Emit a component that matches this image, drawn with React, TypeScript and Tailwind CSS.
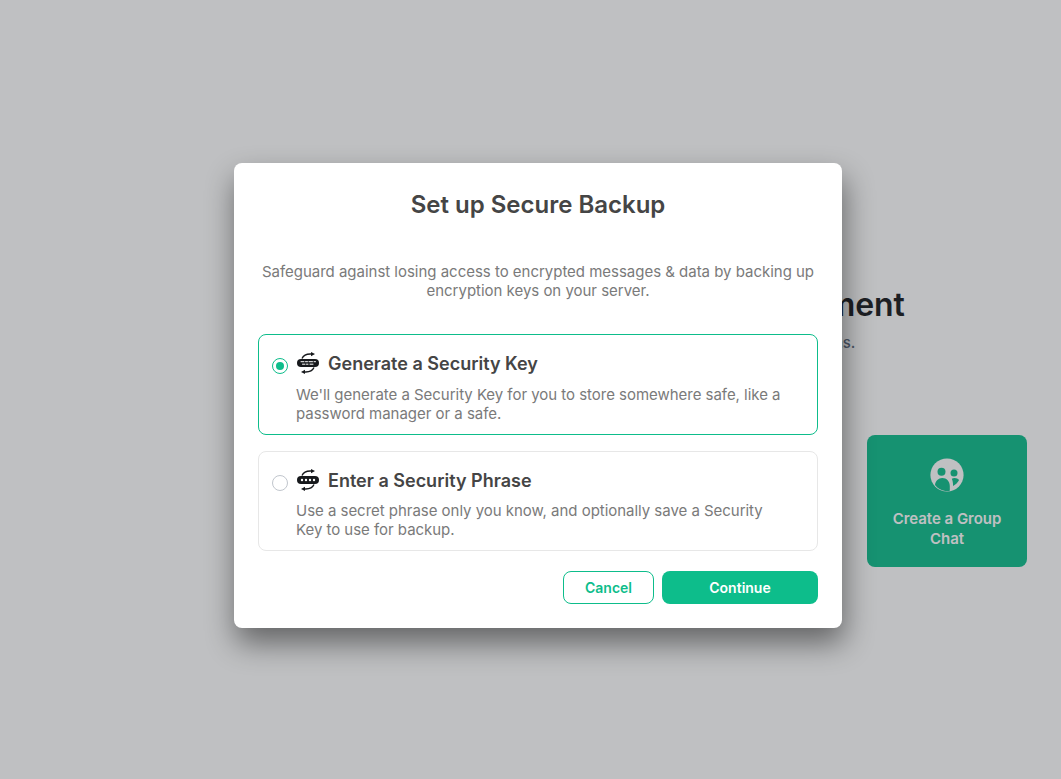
import React from 'react';

const inter = { fontFamily: 'Inter, "Noto Sans", sans-serif' };

function KeyIcon({ dots }: { dots: boolean }) {
  return (
    <svg width="24" height="24" viewBox="0 0 24 24" className="shrink-0" fill="none">
      <path d="M6 7.500C7.500 4.200 10.500 2.800 15 3" stroke="#17191c" strokeWidth="1.400" />
      <path d="M15 1l4 2.100L15 5.200z" fill="#17191c" />
      <path d="M18 16.500C16.500 19.800 13.500 21.200 9 21" stroke="#17191c" strokeWidth="1.400" />
      <path d="M9 18.800l-4 2.100L9 23z" fill="#17191c" />
      <rect x="1" y="8" width="22" height="8" rx="4" fill="#17191c" />
      {dots ? (
        <g fill="#fff">
          <circle cx="6" cy="12" r="1.200" />
          <circle cx="10" cy="12" r="1.200" />
          <circle cx="14" cy="12" r="1.200" />
          <circle cx="18" cy="12" r="1.200" />
        </g>
      ) : (
        <g stroke="#fff" strokeWidth="1" strokeLinecap="round">
          <path d="M5 10.700h3M9.500 10.700h2M13 10.700h3.500M18 10.700h1.500M6.500 13.200h2.500M10.500 13.200h1.500M14 13.200h3" />
        </g>
      )}
    </svg>
  );
}

function GroupIcon() {
  return (
    <svg width="34" height="34" viewBox="0 0 34 34" className="shrink-0">
      <circle cx="17" cy="17" r="16.600" fill="#fff" />
      <circle cx="11.500" cy="13.700" r="4" fill="#0dbd8b" />
      <circle cx="24" cy="15" r="3.500" fill="#0dbd8b" />
      <path d="M5 27c.400-4 3.400-7 7.300-7 4.400 0 7.500 3.400 7.500 8v4.800c-.900.100-1.800.200-2.800.200-4.900 0-9.200-2.400-12-6z" fill="#0dbd8b" />
      <path d="M21.800 20.800c.800-.500 1.800-.800 2.900-.800 1.800 0 3.400.800 4.400 2.100-1.300 2.500-3.400 4.600-6 5.900 0-2.800-.400-5.300-1.300-7.200z" fill="#0dbd8b" />
    </svg>
  );
}

function Option({
  selected,
  dots,
  title,
  descGap,
  children,
}: {
  selected: boolean;
  dots: boolean;
  title: string;
  descGap: string;
  children: React.ReactNode;
}) {
  return (
    <div
      className={`flex rounded-lg border pb-[11px] pl-[13px] pr-[27px] pt-4 ${
        selected ? 'border-[#0dbd8b]' : 'border-[#e7e7e7]'
      }`}
    >
      <div
        className={`mt-[7px] flex h-4 w-4 shrink-0 items-center justify-center rounded-full border ${
          selected ? 'border-[#0dbd8b]' : 'border-[#c1c6cd]'
        }`}
      >
        {selected && <div className="h-2 w-2 rounded-full bg-[#0dbd8b]" />}
      </div>
      <div className="ml-2 min-w-0 flex-1">
        <div className="flex h-6 items-center gap-2 text-[18px] font-semibold text-[#454545]">
          <KeyIcon dots={dots} />
          {title}
        </div>
        <p className={`${descGap} text-[15px] leading-[19px] tracking-[-0.03px] text-[#7a7a7a]`}>{children}</p>
      </div>
    </div>
  );
}

export default function App() {
  return (
    <div className="relative flex h-screen overflow-hidden bg-white" style={inter}>
      {/* home page behind the dialog */}
      <div className="w-[473px] shrink-0" />
      <div className="flex flex-1 flex-col items-center pt-[285px]">
        <h1 className="whitespace-nowrap text-[32px] font-semibold leading-10 tracking-[-0.15px] text-[#17191c]">
          Welcome Element
        </h1>
        <p className="mt-[8px] whitespace-nowrap text-[15px] font-medium leading-5 tracking-[-0.1px] text-[#5c6b80]">
          Own your conversations.
        </p>
        <div className="mt-[82px] flex w-[520px] justify-between">
          <div className="h-[132px] w-40 rounded-lg bg-[#0dbd8b]" />
          <div className="flex h-[132px] w-40 flex-col items-center rounded-lg bg-[#0dbd8b] px-5 pt-[23px] text-center text-[15px] font-semibold leading-5 tracking-[-0.03px] text-white">
            <GroupIcon />
            <span className="mt-[17px]">Create a Group Chat</span>
          </div>
        </div>
      </div>

      {/* overlay */}
      <div className="absolute inset-0 bg-[#2a2d34]/30" />

      {/* dialog */}
      <div className="absolute inset-0 flex items-start pl-[234px] pt-[163px]">
        <div className="w-[608px] rounded-lg bg-white px-6 pb-6 pt-[24px] shadow-[2px_15px_30px_0_rgba(0,0,0,0.48)]">
          <h2 className="text-center text-[24px] font-semibold leading-[36px] text-[#454545]">Set up Secure Backup</h2>
          <p className="mt-[39px] text-center text-[15px] leading-[19px] tracking-[-0.02px] text-[#7a7a7a]">
            Safeguard against losing access to encrypted messages &amp; data by backing up encryption keys on your
            server.
          </p>
          <div className="mt-[34px] flex flex-col gap-4">
            <Option selected dots={false} title="Generate a Security Key" descGap="mt-[10px]">
              We'll generate a Security Key for you to store somewhere safe, like a password manager or a safe.
            </Option>
            <Option selected={false} dots title="Enter a Security Phrase" descGap="mt-[9px]">
              Use a secret phrase only you know, and optionally save a Security Key to use for backup.
            </Option>
          </div>
          <div className="mt-5 flex justify-end gap-2">
            <button className="h-[33px] w-[91px] rounded-lg border border-[#0dbd8b] text-[14px] font-semibold text-[#0dbd8b]">
              Cancel
            </button>
            <button className="h-[33px] w-[156px] rounded-lg bg-[#0dbd8b] text-[14px] font-semibold text-white">
              Continue
            </button>
          </div>
        </div>
      </div>
    </div>
  );
}
